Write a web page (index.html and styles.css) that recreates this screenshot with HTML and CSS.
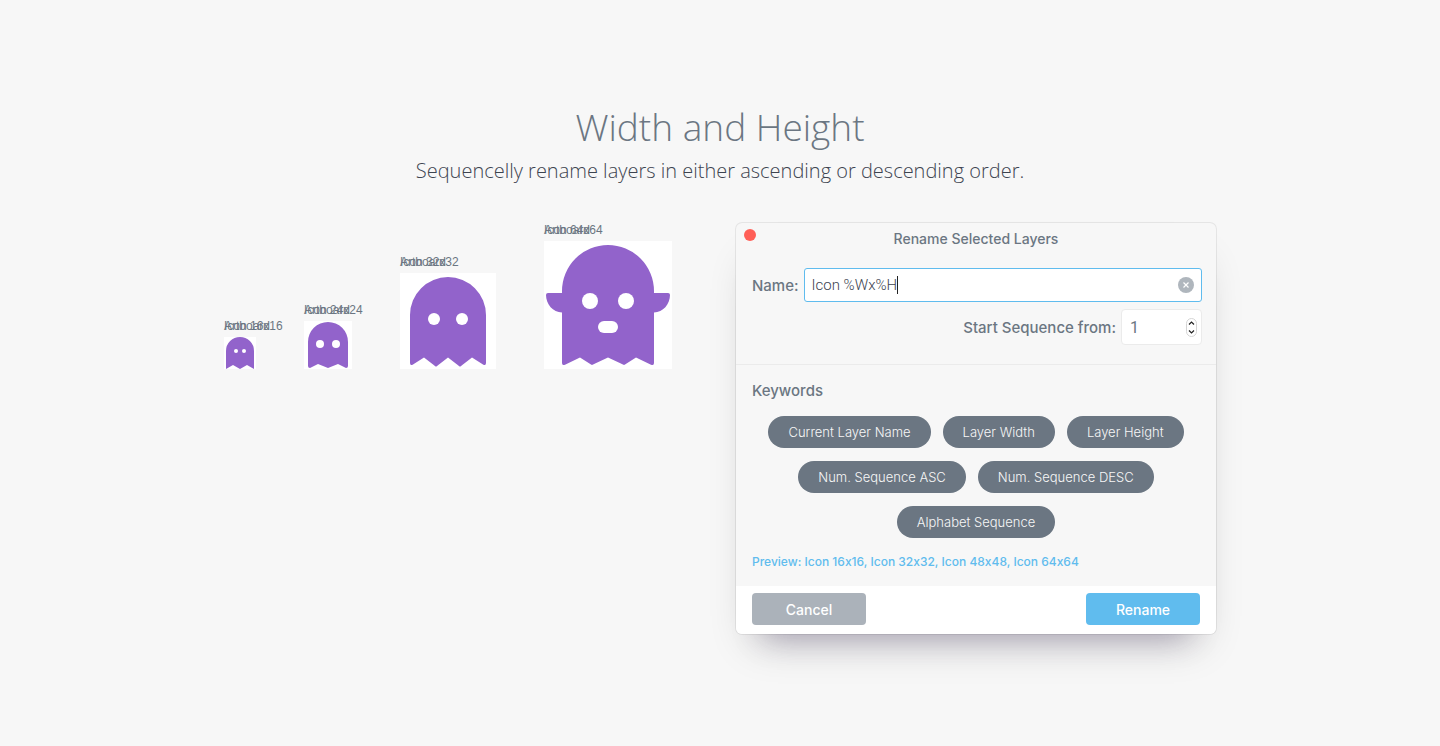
FILE: index.html
```html
<!DOCTYPE html>
<html lang="en">
<head>
    <meta charset="UTF-8">
    <meta name="viewport" content="width=device-width, initial-scale=1.0">
    <title>Width and Height</title>
    <link rel="stylesheet" href="styles.css">
</head>
<body>

<section class="feature">
    <h1>Width and Height</h1>
    <p class="lead">Sequencelly rename layers in either ascending or descending order.</p>

    <div class="demo">
        <!-- Artboards -->
        <div class="artboards">
            <figure class="artboard size-16">
                <figcaption><span>Artboard</span><span>Icon 16x16</span></figcaption>
                <svg viewBox="0 0 32 32" aria-hidden="true">
                    <path class="ghost" d="M2 14a14 14 0 0 1 28 0v18l-7-4-7 4-7-4-7 4z"/>
                    <circle cx="12" cy="14" r="2"/>
                    <circle cx="20" cy="14" r="2"/>
                </svg>
            </figure>
            <figure class="artboard size-24">
                <figcaption><span>Artboard</span><span>Icon 24x24</span></figcaption>
                <svg viewBox="0 0 48 48" aria-hidden="true">
                    <path class="ghost" d="M4 21a20 20 0 0 1 40 0v24q0 2-2 2l-8-4-10 4-10-4-8 4q-2 0-2-2z"/>
                    <circle cx="16" cy="23" r="4"/>
                    <circle cx="32" cy="23" r="4"/>
                </svg>
            </figure>
            <figure class="artboard size-48">
                <figcaption><span>Artboard</span><span>Icon 32x32</span></figcaption>
                <svg viewBox="0 0 96 96" aria-hidden="true">
                    <path class="ghost" d="M10 42a38 38 0 0 1 76 0v48q0 3-3 1.500L72 84.500 61 93q-1 1-2 0L48 84.500 37 93q-1 1-2 0L24 84.500 13 91.500q-3 1.500-3-1.500z"/>
                    <circle cx="34" cy="46" r="6"/>
                    <circle cx="62" cy="46" r="6"/>
                </svg>
            </figure>
            <figure class="artboard size-64">
                <figcaption><span>Artboard</span><span>Icon 64x64</span></figcaption>
                <svg viewBox="0 0 128 128" aria-hidden="true">
                    <path class="ghost" d="M18 50a46 46 0 0 1 92 0v2h14q2 0 2 2c0 9-7 17.500-16 17.500V122q0 3-3 1.700L92 116.500l-11 7q-1 .8-2 0l-15-7-15 7q-1 .8-2 0l-11-7-15 7.200q-3 1.300-3-1.700V71.500C9 71.500 2 63 2 54q0-2 2-2h14z"/>
                    <circle cx="46" cy="60" r="8"/>
                    <circle cx="82" cy="60" r="8"/>
                    <rect x="54" y="80" width="20" height="12" rx="6"/>
                </svg>
            </figure>
        </div>

        <!-- Rename dialog -->
        <form class="dialog">
            <div class="dialog-head">
                <button type="button" class="close" aria-label="Close"></button>
                <h2>Rename Selected Layers</h2>
            </div>

            <div class="fields">
                <div class="row">
                    <label for="name">Name:</label>
                    <div class="name-box">
                        <input type="text" id="name" value="Icon %Wx%H">
                        <span class="caret"></span>
                        <button type="button" class="clear" aria-label="Clear">
                            <svg viewBox="0 0 16 16"><path d="M5.500 5.500l5 5M10.500 5.500l-5 5"/></svg>
                        </button>
                    </div>
                </div>
                <div class="row row-right">
                    <label for="start">Start Sequence from:</label>
                    <div class="number-box">
                        <input type="text" id="start" inputmode="numeric" value="1">
                        <svg class="stepper" viewBox="0 0 11 19" aria-hidden="true">
                            <rect x=".5" y=".5" width="10" height="18" rx="5"/>
                            <path d="M3 6.500L5.500 4 8 6.500M3 12.500L5.500 15 8 12.500"/>
                        </svg>
                    </div>
                </div>
            </div>

            <div class="keywords">
                <h3>Keywords</h3>
                <div class="tags">
                    <button type="button">Current Layer Name</button>
                    <button type="button">Layer Width</button>
                    <button type="button">Layer Height</button>
                    <button type="button">Num. Sequence ASC</button>
                    <button type="button">Num. Sequence DESC</button>
                    <button type="button">Alphabet Sequence</button>
                </div>
                <p class="preview">Preview: Icon 16x16, Icon 32x32, Icon 48x48, Icon 64x64</p>
            </div>

            <div class="actions">
                <button type="button" class="cancel">Cancel</button>
                <button type="submit" class="rename">Rename</button>
            </div>
        </form>
    </div>
</section>

</body>
</html>
```
FILE: styles.css
```css
* {
    box-sizing: border-box;
}
body {
    margin: 0;
    background-color: #f7f7f7;
    color: #6b7682;
    font-family: Inter, "Liberation Sans", sans-serif;
    font-feature-settings: "calt" 0;
}
h1, h2, h3, p, figure {
    margin: 0;
}
button, input {
    font-family: inherit;
    border: none;
}
button {
    cursor: pointer;
}

.feature {
    max-width: 1024px;
    margin: 0 auto;
    padding: 98px 16px;
}
h1 {
    font-family: "Open Sans", sans-serif;
    font-size: 37px;
    font-weight: 350;
    line-height: 58px;
    text-align: center;
}
.lead {
    font-family: "Open Sans", sans-serif;
    font-size: 20px;
    font-weight: 350;
    line-height: 30px;
    text-align: center;
    color: #3d4450;
}

.demo {
    display: flex;
    align-items: flex-start;
    justify-content: space-between;
    margin-top: 37px;
}

/* Artboards */
.artboards {
    display: flex;
    align-items: flex-end;
    gap: 48px;
}
.artboard figcaption {
    display: grid;
    margin-bottom: 4px;
    font-family: "Liberation Sans", Arial, sans-serif;
    font-size: 12px;
    line-height: 14px;
    white-space: nowrap;
}
.artboard span {
    grid-area: 1 / 1;
}
.artboard svg {
    display: block;
    width: 100%;
    background-color: #fff;
    fill: #fff;
}
.artboard .ghost {
    fill: #9263cb;
}
.size-16 { width: 32px; }
.size-24 { width: 48px; }
.size-48 { width: 96px; }
.size-64 { width: 128px; }

/* Dialog */
.dialog {
    width: 480px;
    border-radius: 6px;
    background-color: #f7f7f7;
    box-shadow: 0 0 0 1px rgba(0, 0, 0, 0.06),
                0 0 2px rgba(0, 0, 0, 0.06),
                0 30px 30px -30px rgba(70, 50, 110, 0.35),
                0 24px 40px -16px rgba(0, 0, 0, 0.2);
}
.dialog-head {
    position: relative;
    padding: 7px 16px;
}
.dialog-head h2 {
    font-size: 14px;
    font-weight: 450;
    line-height: 18px;
    text-align: center;
}
.close {
    position: absolute;
    top: 6px;
    left: 8px;
    width: 12px;
    height: 12px;
    padding: 0;
    border-radius: 50%;
    background-color: #ff5f57;
}
.fields {
    display: flex;
    flex-direction: column;
    gap: 7px;
    padding: 13px 14px 19px 16px;
    border-bottom: 1px solid #ebebeb;
}
.row {
    display: flex;
    align-items: center;
    gap: 5px;
}
.row-right {
    justify-content: flex-end;
}
.row label {
    font-size: 15px;
    font-weight: 450;
}
.name-box {
    display: flex;
    flex: 1;
    align-items: center;
    height: 34px;
    padding: 0 7px;
    border: 1px solid #60bcee;
    border-radius: 3px;
    background-color: #fff;
}
.name-box input,
.number-box input {
    min-width: 0;
    padding: 0;
    background: none;
    outline: none;
    font-family: Roboto, sans-serif;
    font-size: 16px;
    color: #3d4450;
}
.name-box input {
    field-sizing: content;
    font-size: 15px;
    font-weight: 300;
}
.caret {
    width: 1px;
    height: 18px;
    background-color: #222;
}
.clear {
    width: 16px;
    height: 16px;
    margin-left: auto;
    padding: 0;
    border-radius: 50%;
    background-color: #afb6bd;
}
.clear svg {
    display: block;
    fill: none;
    stroke: #fff;
    stroke-width: 1.2;
}
.number-box {
    display: flex;
    align-items: center;
    width: 81px;
    height: 36px;
    padding: 0 4px 0 8px;
    border: 1px solid #ebebeb;
    border-radius: 4px;
    background-color: #fff;
}
.number-box input {
    flex: 1;
    color: #6b7682;
}
.stepper {
    width: 11px;
    height: 19px;
    fill: none;
    stroke: #222;
    stroke-width: 1.2;
}
.stepper rect {
    stroke: #d4d4d4;
    stroke-width: 1;
}

.keywords {
    padding: 16px;
}
.keywords h3 {
    font-size: 15px;
    font-weight: 450;
    line-height: 20px;
}
.tags {
    display: flex;
    flex-wrap: wrap;
    justify-content: center;
    gap: 13px 12px;
    margin-top: 15px;
}
.tags button {
    height: 32px;
    padding: 0 20px;
    border-radius: 16px;
    background-color: #6b7682;
    color: #f7f7f7;
    font-size: 13px;
    font-weight: 300;
}
.preview {
    margin-top: 16px;
    color: #60bcee;
    font-size: 12px;
    font-weight: 450;
    line-height: 16px;
}

.actions {
    display: flex;
    justify-content: space-between;
    padding: 7px 16px 9px;
    border-radius: 0 0 6px 6px;
    background-color: #fff;
}
.actions button {
    width: 114px;
    height: 32px;
    border-radius: 4px;
    color: #fff;
    font-size: 14px;
    font-weight: 450;
}
.actions .cancel {
    background-color: #abb2ba;
}
.actions .rename {
    background-color: #60bcee;
}
```
